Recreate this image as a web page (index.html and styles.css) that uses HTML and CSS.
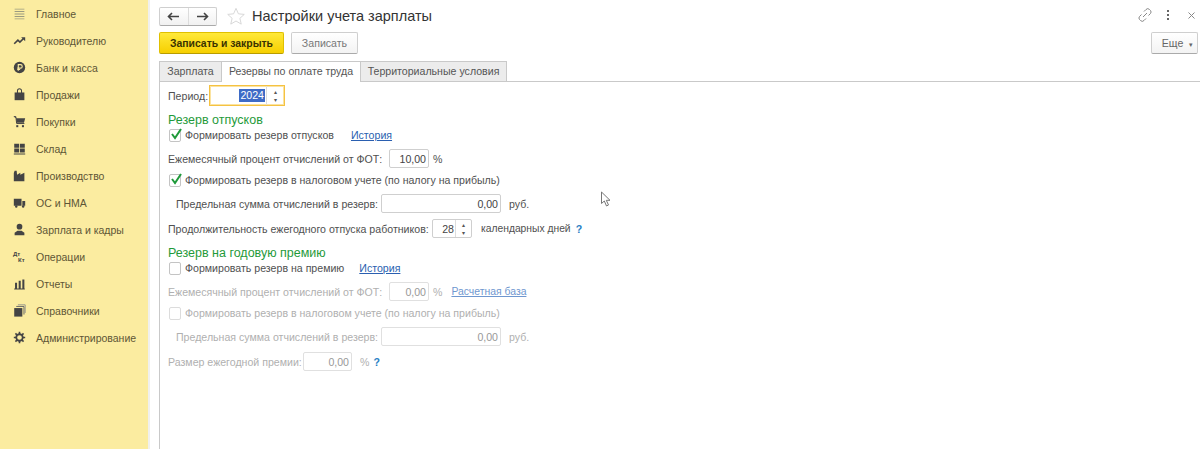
FILE: index.html
```html
<!DOCTYPE html>
<html lang="ru">
<head>
<meta charset="utf-8">
<title>Настройки учета зарплаты</title>
<link rel="stylesheet" href="styles.css">
</head>
<body>
<div class="app">
  <nav class="sidebar">
    <div class="nav-item"><svg class="ico" viewBox="0 0 16 16"><path d="M2 2h12v1.2H2zM2 5h12v1.2H2zM2 8h12v1.2H2zM2 11h12v1.2H2zM2 14h12v1.2H2z" fill="#9a9a80"/></svg><span>Главное</span></div>
    <div class="nav-item"><svg class="ico" viewBox="0 0 16 16"><path d="M1.500 12l4.500-4.500 2.500 2.500L13 5.500" fill="none" stroke="#444" stroke-width="2"/><path d="M10 4h5v5z" fill="#444"/></svg><span>Руководителю</span></div>
    <div class="nav-item"><svg class="ico" viewBox="0 0 16 16"><circle cx="8" cy="8" r="7" fill="#444"/><path d="M6.500 12V4.500h2.700a2.100 2.100 0 0 1 0 4.300H5.200M5.200 10.400h3.600" fill="none" stroke="#fbeca0" stroke-width="1.400"/></svg><span>Банк и касса</span></div>
    <div class="nav-item"><svg class="ico" viewBox="0 0 16 16"><path d="M2 5.500h12v9.500H2z" fill="#444"/><path d="M5.500 7V3.500a2.500 2.500 0 0 1 5 0V7" fill="none" stroke="#444" stroke-width="1.300"/></svg><span>Продажи</span></div>
    <div class="nav-item"><svg class="ico" viewBox="0 0 16 16"><path d="M1 2h2.500l1 7.500h9L15 4H4" fill="#444"/><path d="M1 2h2.500l1 8.500H14" fill="none" stroke="#444" stroke-width="1.200"/><rect x="4" y="12.500" width="2.500" height="2.500" fill="#444"/><rect x="11" y="12.500" width="2.500" height="2.500" fill="#444"/></svg><span>Покупки</span></div>
    <div class="nav-item"><svg class="ico" viewBox="0 0 16 16"><path d="M1.500 2h6v5h-6zM8.500 2h6v5h-6zM1.500 8h6v5h-6zM8.500 8h6v5h-6zM1 14h14v1.500H1z" fill="#444"/></svg><span>Склад</span></div>
    <div class="nav-item"><svg class="ico" viewBox="0 0 16 16"><path d="M1 15V5l1-3h2.500l.5 5 4-2.500V7l5-2.500V15z" fill="#444"/></svg><span>Производство</span></div>
    <div class="nav-item"><svg class="ico" viewBox="0 0 16 16"><path d="M1 3.500h9.500V12H1zM11.500 6H15v6h-3.500z" fill="#444"/><circle cx="4" cy="13" r="1.500" fill="#444"/><circle cx="12.500" cy="13" r="1.500" fill="#444"/></svg><span>ОС и НМА</span></div>
    <div class="nav-item"><svg class="ico" viewBox="0 0 16 16"><circle cx="8" cy="4.500" r="3.500" fill="#444"/><path d="M2 15v-3l3.500-2.500h5L14 12v3z" fill="#444"/></svg><span>Зарплата и кадры</span></div>
    <div class="nav-item"><span class="dtkt"><span>Дт</span><span class="kt">Кт</span></span><span>Операции</span></div>
    <div class="nav-item"><svg class="ico" viewBox="0 0 16 16"><path d="M2.500 7h2.500v7H2.500zM7 4.500h2.500V14H7zM11.500 3H14v11h-2.500zM1.500 14.300h13v1h-13z" fill="#444"/></svg><span>Отчеты</span></div>
    <div class="nav-item"><svg class="ico" viewBox="0 0 16 16"><path d="M1.500 5H11.500V15.500H1.500z" fill="#444"/><path d="M4 3h9.500v10" fill="none" stroke="#666" stroke-width="1.200"/><path d="M6 1h9v10" fill="none" stroke="#888" stroke-width="1"/></svg><span>Справочники</span></div>
    <div class="nav-item"><svg class="ico" viewBox="0 0 16 16"><circle cx="8" cy="8" r="4" fill="none" stroke="#444" stroke-width="2.200"/><path d="M8 1v3M8 12v3M1 8h3M12 8h3M3 3l2.200 2.200M10.800 10.800L13 13M13 3l-2.200 2.200M5.200 10.800L3 13" stroke="#444" stroke-width="2"/></svg><span>Администрирование</span></div>
  </nav>
  <main class="main">
    <header class="titlebar">
      <div class="navgroup">
        <button class="navbtn"><svg width="13" height="9" viewBox="0 0 13 9"><path d="M12 4.500H2M5 1L1.500 4.500 5 8" fill="none" stroke="#444" stroke-width="1.600"/></svg></button>
        <button class="navbtn"><svg width="13" height="9" viewBox="0 0 13 9"><path d="M1 4.500h10M8 1l3.500 3.500L8 8" fill="none" stroke="#444" stroke-width="1.600"/></svg></button>
      </div>
      <svg class="star" width="18" height="18" viewBox="0 0 20 19"><path d="M10 1l2.700 6.100 6.500.6-4.900 4.400 1.500 6.400L10 15.100l-5.800 3.400 1.500-6.400L.8 7.700l6.500-.6z" fill="#fff" stroke="#d4d4d4"/></svg>
      <h1 class="title">Настройки учета зарплаты</h1>
      <div class="winicons">
        <svg width="14" height="14" viewBox="0 0 14 14"><path d="M6 3.500l2-2a2.400 2.400 0 0 1 3.500 0l1 1a2.400 2.400 0 0 1 0 3l-2 2M8 10.500l-2 2a2.400 2.400 0 0 1-3.500 0l-1-1a2.400 2.400 0 0 1 0-3l2-2M5 9l4-4" fill="none" stroke="#888" stroke-width="1"/></svg>
        <svg class="dots" width="4" height="12" viewBox="0 0 4 12"><path d="M1 1h2v2H1zM1 5h2v2H1zM1 9h2v2H1z" fill="#666"/></svg>
        <svg class="close" width="9" height="9" viewBox="0 0 9 9"><path d="M1.500 1.500l6 6M7.500 1.500l-6 6" stroke="#888" stroke-width="1"/></svg>
      </div>
    </header>
    <div class="toolbar">
      <button class="btn primary">Записать и закрыть</button>
      <button class="btn plain">Записать</button>
      <button class="btn more">Еще <span class="caret">▾</span></button>
    </div>
    <div class="tabs">
      <div class="tab first">Зарплата</div>
      <div class="tab active">Резервы по оплате труда</div>
      <div class="tab third">Территориальные условия</div>
      <div class="tabline"></div>
    </div>
    <section class="panel">
      <div class="row r-period">
        <label class="lbl w-period">Период:</label>
        <div class="period"><span class="sel">2024</span><span class="spin"><i>▴</i><i>▾</i></span></div>
      </div>
      <h2 class="heading h1st">Резерв отпусков</h2>
      <div class="row cb gap2">
        <span class="box"><svg width="14" height="13" viewBox="0 0 14 13"><path d="M3 6l3 4 6-9" fill="none" stroke="#1f9a3a" stroke-width="2"/></svg></span>
        <span class="cb-text">Формировать резерв отпусков</span><a class="link l1">История</a>
      </div>
      <div class="row field gap7">
        <label class="lbl w-pct">Ежемесячный процент отчислений от ФОТ:</label>
        <span class="input w40">10,00</span><span class="unit u-pct">%</span>
      </div>
      <div class="row cb gap5">
        <span class="box"><svg width="14" height="13" viewBox="0 0 14 13"><path d="M3 6l3 4 6-9" fill="none" stroke="#1f9a3a" stroke-width="2"/></svg></span>
        <span class="cb-text">Формировать резерв в налоговом учете (по налогу на прибыль)</span>
      </div>
      <div class="row field gap7 indent">
        <label class="lbl w-sum">Предельная сумма отчислений в резерв:</label>
        <span class="input w120">0,00</span><span class="unit u-rub">руб.</span>
      </div>
      <div class="row field gap6">
        <label class="lbl w-dur">Продолжительность ежегодного отпуска работников:</label>
        <span class="input w40 spinner">28<span class="spin small"><i>▴</i><i>▾</i></span></span>
        <span class="unit u-days">календарных дней</span><span class="help h-days">?</span>
      </div>
      <h2 class="heading gap7">Резерв на годовую премию</h2>
      <div class="row cb gap2">
        <span class="box"></span>
        <span class="cb-text">Формировать резерв на премию</span><a class="link l2">История</a>
      </div>
      <div class="row field gap7 off">
        <label class="lbl w-pct">Ежемесячный процент отчислений от ФОТ:</label>
        <span class="input w40">0,00</span><span class="unit u-pct">%</span><a class="link l3">Расчетная база</a>
      </div>
      <div class="row cb gap5 off">
        <span class="box"></span>
        <span class="cb-text">Формировать резерв в налоговом учете (по налогу на прибыль)</span>
      </div>
      <div class="row field gap7 indent off">
        <label class="lbl w-sum">Предельная сумма отчислений в резерв:</label>
        <span class="input w120">0,00</span><span class="unit u-rub">руб.</span>
      </div>
      <div class="row field gap6 off">
        <label class="lbl w-bonus">Размер ежегодной премии:</label>
        <span class="input w49">0,00</span><span class="unit u-bonus">%</span><span class="help h-bonus">?</span>
      </div>
    </section>
  </main>
</div>
<svg class="cursor" width="12" height="17" viewBox="0 0 12 17"><path d="M1.500 1v11.500l2.800-2.500 2.200 5 2-1-2.200-4.700H10z" fill="#fff" stroke="#777"/></svg>
</body>
</html>
```

FILE: styles.css
```css
* { box-sizing: border-box; }
html, body { margin: 0; height: 100%; overflow: hidden; }
body { font-family: "Liberation Sans", Arial, sans-serif; font-size: 10.6px; color: #4a4a4a; background: #fff; }
button { font-family: inherit; }
.app { display: flex; height: 449px; }

/* sidebar */
.sidebar { width: 150px; flex: none; background: #fbeca0; border-right: 2px solid #f0f0ee; }
.nav-item { height: 27px; display: flex; align-items: center; padding-left: 13px; color: #5e5636; font-size: 10.500px; white-space: nowrap; }
.ico { width: 13px; height: 13px; margin-right: 10px; flex: none; }
.dtkt { width: 13px; margin-right: 10px; display: flex; flex-direction: column; font-size: 6px; font-weight: bold; line-height: 6px; color: #444; }
.kt { padding-left: 5px; }

/* main */
.main { flex: 1; min-width: 0; padding-left: 9px; display: flex; flex-direction: column; }
.titlebar { height: 32px; padding-top: 7px; display: flex; align-items: flex-start; }
.navgroup { display: flex; width: 58px; height: 19px; border: 1px solid #cfcfcf; border-bottom-color: #aaa; border-radius: 2px; background: linear-gradient(#fff, #f1f1f1); }
.navbtn { flex: 1; border: 0; padding: 0; background: none; display: flex; align-items: center; justify-content: center; }
.navbtn + .navbtn { border-left: 1px solid #dcdcdc; }
.star { margin: 0 0 0 10px; }
.title { margin: -1px 0 0 7px; font-size: 14.500px; line-height: 20px; font-weight: normal; color: #333; white-space: nowrap; }
.winicons { margin-left: auto; display: flex; align-items: center; height: 16px; padding-right: 4px; }
.dots { margin-left: 14px; }
.close { margin-left: 17px; }

.toolbar { height: 22px; display: flex; align-items: stretch; }
.btn { font-size: 10.600px; padding: 0; border-radius: 2px; }
.primary { width: 125px; border: 1px solid #e0c000; border-bottom-color: #b89c00; background: linear-gradient(#ffe93a, #f6cf00); color: #3a3300; font-weight: bold; font-size: 10.400px; }
.plain { width: 67px; margin-left: 7px; border: 1px solid #cfcfcf; border-bottom-color: #aaa; background: linear-gradient(#fff, #f3f3f3); color: #777; }
.more { width: 47px; margin: 0 2px 0 auto; padding-left: 6px; border: 1px solid #cfcfcf; border-bottom-color: #aaa; background: linear-gradient(#fff, #f3f3f3); color: #666; }
.caret { font-size: 7px; margin-left: 3px; }

.tabs { height: 21px; margin-top: 7px; display: flex; align-items: stretch; }
.tab { font-size: 10.600px; line-height: 18px; text-align: center; border: 1px solid #c9c9c9; color: #555; background: #ececec; white-space: nowrap; }
.first { width: 62px; border-right: 0; }
.active { width: 140px; background: #fff; border-bottom: 0; }
.third { width: 146px; border-left: 0; }
.tabline { flex: 1; border-bottom: 1px solid #c9c9c9; }

.panel { flex: 1; border-left: 1px solid #c9c9c9; padding: 3px 0 0 8px; display: flex; flex-direction: column; }
.row { display: flex; align-items: center; flex: none; color: #505050; white-space: nowrap; }
.r-period { height: 21px; }
.period { width: 76px; height: 21px; border: 1px solid #f5c242; box-shadow: inset 0 0 0 1px #fbe3a0; display: flex; align-items: center; justify-content: flex-end; padding-right: 1px; }
.sel { background: #3e6bc6; color: #fff; line-height: 13px; padding: 0 1px; margin-right: 1px; }
.spin { width: 17px; height: 100%; border-left: 1px solid #ddd; display: flex; flex-direction: column; align-items: center; justify-content: center; }
.spin i { font-style: normal; font-size: 6px; line-height: 8px; color: #555; }
.heading { margin: 0; height: 14px; font-size: 12.500px; line-height: 16px; font-weight: normal; color: #1f9a3a; flex: none; }
.h1st { margin-top: 6px; }
.cb { height: 14px; padding-left: 1px; }
.gap2 { margin-top: 2px; }
.gap5 { margin-top: 5px; }
.gap6 { margin-top: 6px; }
.gap7 { margin-top: 7px; }
.field { height: 19px; }
.indent { padding-left: 8px; }
.box { width: 12px; height: 13px; border: 1px solid #c4c4c4; border-radius: 2px; background: #fff; position: relative; flex: none; }
.box svg { position: absolute; left: -1px; top: -2px; }
.cb-text { margin-left: 4px; }
.link { color: #2a5fb0; text-decoration: underline; }
.l1 { margin-left: 17px; }
.l2 { margin-left: 15px; }
.l3 { margin-left: 9px; color: #6f97cf; font-size: 10.400px; }
.input { height: 19px; border: 1px solid #cfcfcf; border-radius: 2px; display: flex; align-items: center; justify-content: flex-end; padding-right: 2px; background: #fff; color: #444; flex: none; }
.w40 { width: 40px; }
.w49 { width: 49px; }
.w120 { width: 120px; }
.spinner { padding-right: 0; }
.small { width: 16px; margin-left: 1px; }
.lbl { flex: none; }
.w-period { width: 41px; }
.w-pct { width: 221px; }
.w-sum { width: 205px; }
.w-dur { width: 264px; }
.w-bonus { width: 135px; }
.unit { flex: none; }
.u-pct { margin-left: 4px; }
.u-rub { margin-left: 8px; }
.u-days { margin-left: 9px; font-size: 10.300px; }
.u-bonus { margin-left: 8px; }
.help { color: #2a7fc4; font-weight: bold; }
.h-days { margin-left: 5px; }
.h-bonus { margin-left: 4px; }
.off .lbl, .off .unit, .off .cb-text, .off .input { color: #b0b0b0; }
.off .input { border-color: #e0e0e0; color: #999; }
.off .box { border-color: #dcdcdc; }

.cursor { position: absolute; left: 600px; top: 191px; }
```
